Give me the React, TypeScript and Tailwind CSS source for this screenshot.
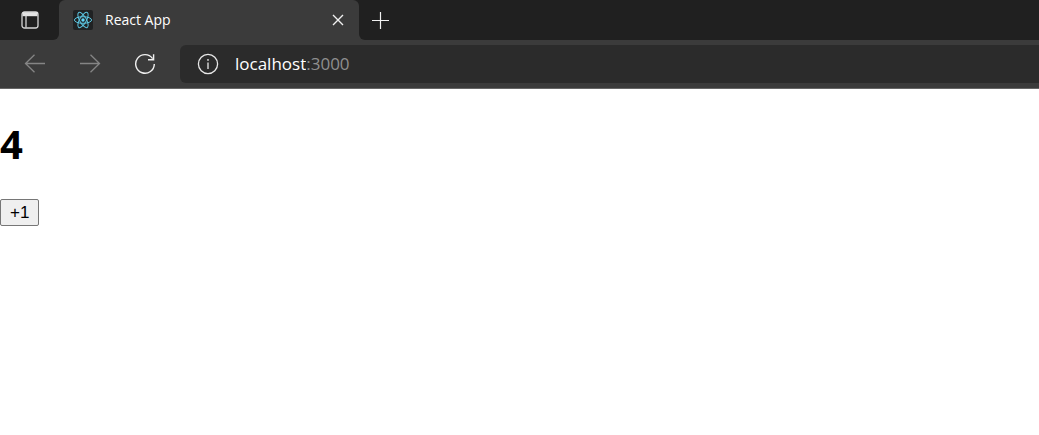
import { useState } from 'react';

function ReactLogo() {
  return (
    <svg viewBox="0 0 20 20" className="w-5 h-5 shrink-0" fill="none" aria-hidden="true">
      <rect width="20" height="20" rx="2" fill="#202223" />
      <g stroke="#5cc5e0" strokeWidth="1">
        <ellipse cx="10" cy="10" rx="8.6" ry="3.3" />
        <ellipse cx="10" cy="10" rx="8.6" ry="3.3" transform="rotate(60 10 10)" />
        <ellipse cx="10" cy="10" rx="8.6" ry="3.3" transform="rotate(120 10 10)" />
      </g>
      <circle cx="10" cy="10" r="1.7" fill="#61dafb" />
    </svg>
  );
}

function TabBar() {
  return (
    <div className="flex h-10">
      <div className="flex w-[59px] items-center justify-center rounded-br-md bg-[#202020]">
        <button aria-label="Tab actions menu">
          <svg viewBox="0 0 18 18" className="w-[18px] h-[18px]" fill="none" stroke="#d6d6d6" strokeWidth="1.3">
            <rect x="1" y="1" width="16" height="16" rx="2.5" />
            <path d="M1.5 3.2h15" strokeWidth="4" stroke="#e4e4e4" />
            <path d="M5 4.5v12" />
          </svg>
        </button>
      </div>

      <div className="w-[300px] bg-linear-to-b from-[#202020] from-50% to-[#3b3b3b] to-50%">
        <div className="flex h-full items-center rounded-t-md bg-[#3b3b3b] pl-3.5 pr-[15px]">
          <ReactLogo />
          <span className="ml-3 flex-1 text-sm text-white">React App</span>
          <button aria-label="Close tab">
            <svg viewBox="0 0 12 12" className="w-3 h-3" fill="none" stroke="#f0f0f0" strokeWidth="1.4">
              <path d="M1 1l10 10M11 1L1 11" />
            </svg>
          </button>
        </div>
      </div>

      <div className="flex flex-1 items-center rounded-bl-md bg-[#202020] pl-3">
        <button aria-label="New tab">
          <svg viewBox="0 0 19 19" className="w-[19px] h-[19px]" fill="none" stroke="#f0f0f0" strokeWidth="1.2">
            <path d="M1 9.5h17M9.5 1v17" />
          </svg>
        </button>
      </div>
    </div>
  );
}

function Toolbar() {
  return (
    <div className="flex items-center border-b border-[#666666] py-[5px] pl-6">
      <div className="flex gap-[33px]">
        <button aria-label="Back">
          <svg viewBox="0 0 22 20" className="w-[22px] h-5" fill="none" stroke="#858585" strokeWidth="1.3">
            <path d="M21 9.5H1.5M10.5 0.7L1.5 9.5l9 8.8" />
          </svg>
        </button>
        <button aria-label="Forward">
          <svg viewBox="0 0 22 20" className="w-[22px] h-5" fill="none" stroke="#858585" strokeWidth="1.3">
            <path d="M1 9.5h19.5M11.5 0.7l9 8.8-9 8.8" />
          </svg>
        </button>
        <button aria-label="Refresh">
          <svg viewBox="0 0 22 22" className="w-[22px] h-[22px]" fill="none" stroke="#f0f0f0" strokeWidth="1.4">
            <path d="M20.3 11A9.3 9.3 0 1 1 18.6 5.6M19.6 1.2v5.6h-5.6" />
          </svg>
        </button>
      </div>

      <div className="ml-6 flex h-[38px] flex-1 items-center rounded-l-md bg-[#2b2b2b] pl-[17px]">
        <button aria-label="View site information">
          <svg viewBox="0 0 22 22" className="w-[22px] h-[22px]" fill="none" stroke="#e8e8e8" strokeWidth="1.3">
            <circle cx="11" cy="11" r="9.6" />
            <path d="M11 9.5v6.5" />
            <circle cx="11" cy="6.9" r="0.9" fill="#e8e8e8" stroke="none" />
          </svg>
        </button>
        <label className="ml-4 flex text-[17px] leading-6 text-[#8f8f8f]">
          <input
            aria-label="Address"
            defaultValue="localhost"
            className="field-sizing-content bg-transparent text-white outline-none"
          />
          <span>:3000</span>
        </label>
      </div>
    </div>
  );
}

export default function App() {
  const [count, setCount] = useState(4);

  return (
    <div className="min-h-screen bg-white font-['Open_Sans',sans-serif]">
      <header className="bg-[#3b3b3b]">
        <TabBar />
        <Toolbar />
      </header>

      <main className="flex flex-col items-start gap-7 pt-7 text-black">
        <h1 className="text-[40px] leading-[54px] font-bold">{count}</h1>
        <button
          onClick={() => setCount(count + 1)}
          className="rounded-xs border border-[#767676] bg-[#efefef] px-[9px] font-['Liberation_Sans',sans-serif] text-[17px] leading-[25px]"
        >
          +1
        </button>
      </main>
    </div>
  );
}
